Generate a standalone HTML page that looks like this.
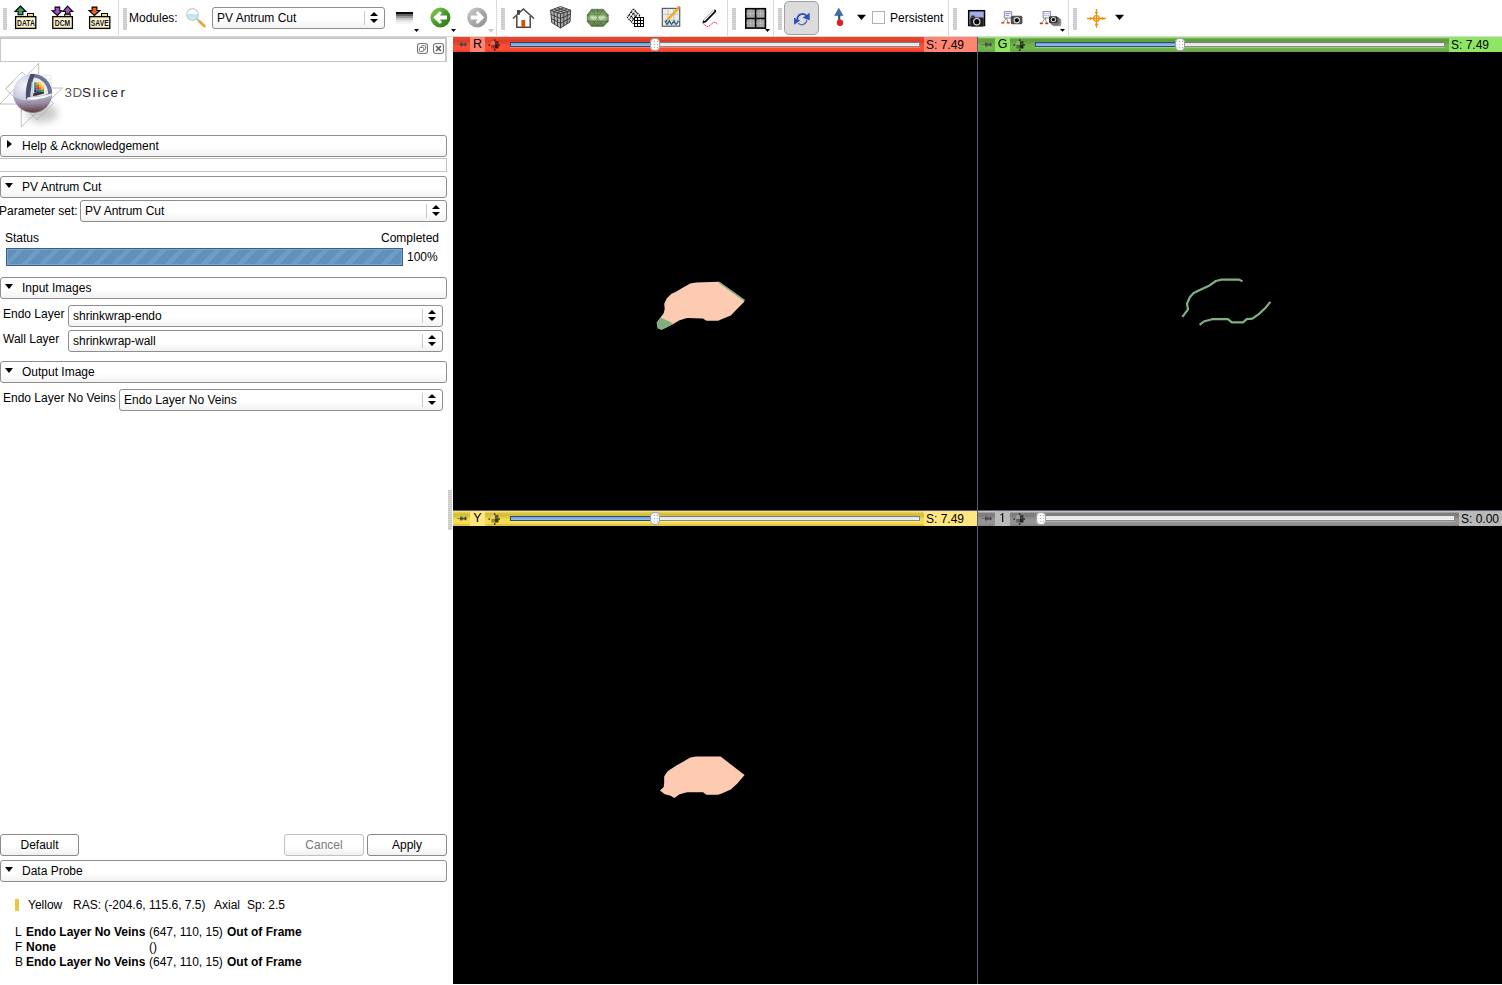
<!DOCTYPE html>
<html><head><meta charset="utf-8">
<style>
*{box-sizing:border-box;margin:0;padding:0}
html,body{width:1502px;height:985px;overflow:hidden;background:#fff;font-family:"Liberation Sans",sans-serif;font-size:12px;color:#000}
.a{position:absolute}
.t{position:absolute;white-space:pre;line-height:14px}
.grip{position:absolute;width:4px;height:22px;top:8px;background:repeating-linear-gradient(#c8c8c8 0 1px,#d8d8d8 1px 2px)}
.sep{position:absolute;top:0;width:1px;height:36px;background:#dcdcdc}
.hdr{position:absolute;left:0;width:447px;height:22px;border:1px solid #8e8e8e;border-radius:3px;background:linear-gradient(#fff 0%,#fff 55%,#f2f2f2 100%)}
.hdr .t{left:21px;top:3px}
.tri-d{position:absolute;left:4px;top:6px;width:0;height:0;border-left:4.7px solid transparent;border-right:4.7px solid transparent;border-top:5.8px solid #000}
.tri-r{position:absolute;left:6px;top:4px;width:0;height:0;border-top:4.6px solid transparent;border-bottom:4.6px solid transparent;border-left:5.4px solid #000}
.combo{position:absolute;height:22px;border:1px solid #8e8e8e;border-radius:3px;background:linear-gradient(#fff 0%,#fff 55%,#f2f2f2 100%)}
.combo .t{left:4px;top:3px}
.combo .cs{position:absolute;right:19px;top:3px;width:1px;height:14px;background:#c8c8c8}
.combo .au{position:absolute;right:6px;top:4px;border-left:4px solid transparent;border-right:4px solid transparent;border-bottom:4px solid #000}
.combo .ad{position:absolute;right:6px;top:11px;border-left:4px solid transparent;border-right:4px solid transparent;border-top:4px solid #000}
.btn{position:absolute;height:22px;border:1px solid #8a8a8a;border-radius:3px;background:linear-gradient(#fff 0%,#fff 55%,#f0f0f0 100%)}
.btn .t{top:3px;width:100%;text-align:center}
.bar{position:absolute;height:15px;overflow:hidden}
.view{position:absolute;background:#000}
.blab{top:1px;line-height:13px;font-size:12.5px}
.slab{top:2px;line-height:13px;font-size:12px}
.gfill{border:1px solid #2c4a72;border-right:none;background:linear-gradient(#74a0cc,#88b6e4 70%,#98c6f4)}
.gempty{border:1px solid #888;border-left:none;border-top-color:#7a8080;background:linear-gradient(#e4e4e4,#e8e8e8 60%,#f4f4f4)}
.gempty2{border:1px solid #8a8a8a;border-top:none;border-left:none;background:linear-gradient(#e8e8e8,#eaeaea 60%,#f6f6f6)}
.handle{width:10px;height:13px;border-radius:4px;border:1px solid #9aa0a4;background:#fafafa}
</style></head><body>

<!-- TOOLBAR -->
<div class="a" style="left:0;top:0;width:1502px;height:36px;background:#fff"></div>
<div class="a" style="left:0;top:36px;width:1502px;height:1px;background:#dadada"></div>
<div class="grip" style="left:3px"></div>
<div class="sep" style="left:118px"></div>
<div class="grip" style="left:123px"></div>
<div class="t" style="left:129px;top:11px">Modules:</div>
<div class="combo" style="left:212px;top:7px;width:173px"><div class="t">PV Antrum Cut</div><div class="cs"></div><div class="au"></div><div class="ad"></div></div>
<div class="sep" style="left:496px"></div>
<div class="grip" style="left:501px"></div>
<div class="sep" style="left:727px"></div>
<div class="grip" style="left:732px"></div>
<div class="sep" style="left:773px"></div>
<div class="grip" style="left:778px"></div>
<div class="a" style="left:784px;top:1px;width:35px;height:34px;border:1px solid #a0a0a0;border-radius:5px;background:#dcdcdc"></div>
<div class="a" style="left:872px;top:11px;width:13px;height:13px;border:1px solid #b0b0b0;background:#fff"></div>
<div class="t" style="left:890px;top:11px">Persistent</div>
<div class="sep" style="left:948px"></div>
<div class="grip" style="left:953px"></div>
<div class="sep" style="left:1068px"></div>
<div class="grip" style="left:1073px"></div>

<svg class="a" style="left:0;top:0" width="1502" height="36" viewBox="0 0 1502 36">
<defs>
<linearGradient id="fold" x1="0" y1="0" x2="0" y2="1"><stop offset="0" stop-color="#f6dc80"/><stop offset=".25" stop-color="#fff8dc"/><stop offset=".8" stop-color="#fff8dc"/><stop offset="1" stop-color="#f4d880"/></linearGradient>
<linearGradient id="gback" x1="0" y1="0" x2="1" y2="1"><stop offset="0" stop-color="#8ed858"/><stop offset=".5" stop-color="#4a9a2a"/><stop offset="1" stop-color="#2e6e16"/></linearGradient>
<linearGradient id="gfwd" x1="0" y1="0" x2="1" y2="1"><stop offset="0" stop-color="#d0d0d0"/><stop offset=".5" stop-color="#a8a8a8"/><stop offset="1" stop-color="#8e8e8e"/></linearGradient>
<radialGradient id="oct" cx=".5" cy=".5" r=".6"><stop offset="0" stop-color="#d8ecc4"/><stop offset=".6" stop-color="#94b47c"/><stop offset="1" stop-color="#4a6a3a"/></radialGradient>
<linearGradient id="glass" x1="0" y1="0" x2="0" y2="1"><stop offset="0" stop-color="#fff"/><stop offset=".45" stop-color="#f4fbff"/><stop offset=".5" stop-color="#b8e0f0"/><stop offset="1" stop-color="#d8f0fa"/></linearGradient>
</defs>
<!-- DATA -->
<g transform="translate(12,4)">
<polygon points="8.4,2 13.9,7.5 10.9,7.5 10.9,10.8 6.1,10.8 6.1,7.5 3,7.5" fill="#3a9a5c" stroke="#000" stroke-width="1.1" stroke-linejoin="miter"/>
<rect x="15" y="9" width="7" height="4" fill="#000"/><rect x="16" y="10" width="5" height="3" fill="#f8e08c"/>
<rect x="3.6" y="12.6" width="20.2" height="11.8" fill="url(#fold)" stroke="#000" stroke-width="1.3"/>
<text x="5" y="21.9" font-family="Liberation Sans" font-weight="bold" font-size="9.4" textLength="17.8" lengthAdjust="spacingAndGlyphs" fill="#111">DATA</text>
</g>
<!-- DCM -->
<g transform="translate(48,4)">
<polygon points="7.1,3.1 11.7,3.1 11.7,6.8 13.8,6.8 9.4,11.4 4.1,6.8 7.1,6.8" fill="#a050d0" stroke="#000" stroke-width="1.1"/>
<polygon points="19.5,2.1 24.7,7.5 21.9,7.5 21.9,10 17.5,10 17.5,7.5 15,7.5" fill="#a050d0" stroke="#000" stroke-width="1.1"/>
<rect x="16.2" y="9.8" width="6.6" height="3.2" fill="#000"/><rect x="17.2" y="10.8" width="4.6" height="2.2" fill="#f8e08c"/>
<rect x="4.8" y="12.6" width="19.6" height="11.8" fill="url(#fold)" stroke="#000" stroke-width="1.3"/>
<text x="6.8" y="21.9" font-family="Liberation Sans" font-weight="bold" font-size="9.4" textLength="15.4" lengthAdjust="spacingAndGlyphs" fill="#111">DCM</text>
</g>
<!-- SAVE -->
<g transform="translate(86,4)">
<polygon points="6.1,3.1 10.9,3.1 10.9,6.5 13.9,6.5 8.4,11.4 3,6.5 6.1,6.5" fill="#f06018" stroke="#000" stroke-width="1.1"/>
<rect x="15" y="9" width="7" height="4" fill="#000"/><rect x="16" y="10" width="5" height="3" fill="#f8e08c"/>
<rect x="3.6" y="12.6" width="20.2" height="11.8" fill="url(#fold)" stroke="#000" stroke-width="1.3"/>
<text x="4.8" y="21.9" font-family="Liberation Sans" font-weight="bold" font-size="9.4" textLength="17.9" lengthAdjust="spacingAndGlyphs" fill="#111">SAVE</text>
</g>
<!-- magnifier -->
<line x1="196.5" y1="18.6" x2="199.2" y2="21.2" stroke="#b8bcc0" stroke-width="2"/>
<line x1="199.6" y1="21.6" x2="204.4" y2="26" stroke="#e8a838" stroke-width="2.8" stroke-linecap="round"/>
<circle cx="192.5" cy="14.4" r="5.8" fill="url(#glass)" stroke="#c4c8cc" stroke-width="1.1"/>
<path d="M187,14 Q189,12.5 192,13.8 Q195,15 198,13.2" fill="none" stroke="#fff" stroke-width=".8" opacity=".8"/>
<!-- gradient icon -->
<rect x="396" y="12" width="17" height="2" fill="#0a0a0a"/>
<rect x="396" y="14" width="17" height="2" fill="#646464"/>
<rect x="396" y="16" width="17" height="2" fill="#989898"/>
<rect x="396" y="18" width="17" height="2" fill="#c8c8c8"/>
<rect x="396" y="20" width="17" height="2" fill="#e8e8e8"/>
<rect x="396" y="22" width="17" height="2" fill="#f4f4f4"/>
<polygon points="414,29 419,29 416.5,32" fill="#000"/>
<!-- back -->
<circle cx="440.4" cy="17.5" r="10" fill="url(#gback)"/>
<polygon points="433.2,17.5 439.9,11 442,13 439.8,15.5 446.9,15.5 446.9,19.5 439.8,19.5 442,22 439.9,24" fill="#fff"/>
<polygon points="451,29 456,29 453.5,32" fill="#000"/>
<!-- forward -->
<circle cx="477.2" cy="17.5" r="10" fill="url(#gfwd)"/>
<polygon points="484.4,17.5 477.7,11 475.6,13 477.8,15.5 470.7,15.5 470.7,19.5 477.8,19.5 475.6,22 477.7,24" fill="#fff"/>
<polygon points="488,29 494,29 491,32.4" fill="#c8c8c8"/>
<!-- house -->
<rect x="517" y="10.1" width="3" height="4.5" fill="#404040"/>
<polyline points="512.9,18.5 523.4,9 534,18.5" fill="none" stroke="#4a4a4a" stroke-width="1.6"/>
<polyline points="516.8,15.5 516.8,27.2 530.2,27.2 530.2,15.5" fill="#fff" stroke="#4a4a4a" stroke-width="1.5"/>
<rect x="521.4" y="20" width="3.8" height="7" fill="#d85000"/>
<!-- cube -->
<g stroke="#333" stroke-width="0.9" fill="#9a9a9a">
<polygon points="560.5,6.5 570.7,10.3 560.5,13.8 550.6,10.3" fill="#cccccc"/>
<polygon points="550.6,10.3 560.5,13.8 560.5,28 551.7,22.6" fill="#b4b4b4"/>
<polygon points="560.5,13.8 570.7,10.3 570,22 560.5,28" fill="#a4a4a4"/>
<path d="M553.9,9.1 L563.9,12.6 M557.2,7.8 L567.3,11.5 M563.9,7.8 L553.9,11.5 M567.3,9.1 L557.2,12.6 M550.9,14.4 L560.5,18.5 M551.2,18.5 L560.5,23.3 M553.9,11.5 L554.6,24.4 M557.2,12.6 L557.6,26.2 M560.5,18.5 L570.4,14.2 M560.5,23.3 L570.2,18.1 M563.9,12.6 L563.7,26 M567.3,11.5 L567,24" fill="none"/>
</g>
<!-- octagon -->
<linearGradient id="octg" x1="0" y1="0" x2="0" y2="1"><stop offset="0" stop-color="#587848"/><stop offset=".3" stop-color="#88a870"/><stop offset=".38" stop-color="#a8c890"/><stop offset=".5" stop-color="#cce4b8"/><stop offset=".62" stop-color="#a8c890"/><stop offset=".7" stop-color="#789860"/><stop offset="1" stop-color="#587848"/></linearGradient>
<linearGradient id="octh" x1="0" y1="0" x2="1" y2="0"><stop offset="0" stop-color="#3a5a2a" stop-opacity=".6"/><stop offset=".2" stop-color="#3a5a2a" stop-opacity="0"/><stop offset=".8" stop-color="#3a5a2a" stop-opacity="0"/><stop offset="1" stop-color="#3a5a2a" stop-opacity=".6"/></linearGradient>
<polygon points="591.5,9.2 603.3,9.2 608.3,14.9 608.3,21.4 603.3,26.4 591.5,26.4 587.2,21.4 587.2,14.9" fill="url(#octg)"/>
<polygon points="591.5,9.2 603.3,9.2 608.3,14.9 608.3,21.4 603.3,26.4 591.5,26.4 587.2,21.4 587.2,14.9" fill="url(#octh)" stroke="#4a6040" stroke-width=".5"/>
<path d="M597.7,9.2 V26.4 M587.2,14.9 H608.3 M587.2,21.4 H608.3 M591.5,9.2 L603.3,26.4 M603.3,9.2 L591.5,26.4 M587.2,14.9 L597.7,26.4 M608.3,14.9 L597.7,26.4" stroke="#2a4020" stroke-width=".5" opacity=".55" fill="none"/>
<!-- grid icon -->
<path d="M633.40,9.00 L639.80,15.50 M631.30,11.80 L637.70,18.30 M629.20,14.60 L635.60,21.10 M627.10,17.40 L633.50,23.90 M633.40,9.00 L627.10,17.40 M635.53,11.17 L629.23,19.57 M637.67,13.33 L631.37,21.73 M639.80,15.50 L633.50,23.90" fill="none" stroke="#000" stroke-width="1.25" stroke-dasharray="1.1 .9"/>
<g shape-rendering="crispEdges">
<rect x="634" y="17" width="10" height="10" fill="#000"/>
<g fill="#fff"><rect x="635" y="18" width="2" height="2"/><rect x="638" y="18" width="2" height="2"/><rect x="641" y="18" width="2" height="2"/><rect x="635" y="21" width="2" height="2"/><rect x="638" y="21" width="2" height="2"/><rect x="641" y="21" width="2" height="2"/><rect x="635" y="24" width="2" height="2"/><rect x="638" y="24" width="2" height="2"/><rect x="641" y="24" width="2" height="2"/></g>
</g>
<!-- editor -->
<rect x="662.3" y="8.4" width="17.4" height="17.8" fill="#ececec" stroke="#5a5a5a" stroke-width="1.2"/>
<path d="M668.1,8.4 V26.2 M673.9,8.4 V26.2 M662.3,14.3 H679.7 M662.3,20.2 H679.7" stroke="#b4b4b4" stroke-width=".7"/>
<polyline points="665,21 667,24.5 669.5,21 671.5,24.5 674,21 676,24.5 678.6,21" fill="none" stroke="#2a6a8c" stroke-width="1.3"/>
<line x1="667" y1="20.3" x2="678.2" y2="8.4" stroke="#e8b020" stroke-width="2.6"/>
<circle cx="679" cy="7.5" r="1.5" fill="#f07860"/>
<polygon points="665.5,22 666,19.7 667.7,21.3" fill="#333"/>
<!-- pen -->
<path d="M703.2,23.4 C705,25.5 706.5,26.6 708.2,26.4 C710,26 711.5,23.6 713.5,22.5 C715,21.8 716.5,23 717.6,24.4" fill="none" stroke="#e02848" stroke-width="1" stroke-dasharray="1.6 .6"/>
<line x1="705" y1="20.8" x2="714.6" y2="11.2" stroke="#000" stroke-width="3.2" stroke-linecap="round"/>
<line x1="704.5" y1="20.2" x2="713.8" y2="10.8" stroke="#fff" stroke-width="1.5" stroke-linecap="round"/>
<line x1="704" y1="19.8" x2="713.2" y2="10.4" stroke="#999" stroke-width=".5"/>
<polygon points="702.3,23.2 703.2,20.4 705.3,22.3" fill="#000"/>
<!-- layout -->
<rect x="745.8" y="8.7" width="19.6" height="19.4" fill="#a4a4a4" stroke="#000" stroke-width="1.6"/>
<path d="M755.6,8.7 V28.1 M745.8,18.4 H765.4" stroke="#000" stroke-width="1.5"/>
<path d="M750.7,9.6 V17.6 M760.5,9.6 V17.6 M750.7,19.2 V27.2 M760.5,19.2 V27.2 M746.6,13.6 H754.8 M756.4,13.6 H764.6 M746.6,23.2 H754.8 M756.4,23.2 H764.6" stroke="#f4f0c0" stroke-width=".7" stroke-dasharray=".7 1.3" fill="none"/>
<polygon points="765,29 770,29 767.5,32" fill="#000"/>
<!-- sync -->
<path d="M797.5,19.5 A5,5 0 0 1 806.2,15.6" fill="none" stroke="#2a50c0" stroke-width="1.7"/>
<path d="M806.8,19.8 A5,5 0 0 1 798.2,23.2" fill="none" stroke="#5a6aa8" stroke-width="1.2"/>
<polygon points="802.6,17.8 809.6,12.8 809.8,20.2" fill="#2a50c0"/>
<polygon points="794,17.8 800.2,20.6 794.2,24.8" fill="#2a50c0"/>
<!-- arrow ball -->
<line x1="839.2" y1="15" x2="839.2" y2="21" stroke="#2a5a8a" stroke-width="2.2"/>
<polygon points="838.8,8.3 843,15.6 834.6,15.6" fill="#3a70a8" stroke="#2a5080" stroke-width=".5"/>
<circle cx="840" cy="22.8" r="3.2" fill="#e02020"/>
<polygon points="857,14.8 866,14.8 861.5,20" fill="#000"/>
<!-- cam1 -->
<rect x="968.7" y="10.7" width="15.8" height="14.8" fill="#a8acec" stroke="#000" stroke-width="1.5"/>
<rect x="971.2" y="15.6" width="3.6" height="2.4" rx=".5" fill="#333" stroke="#888" stroke-width=".4"/>
<rect x="970.2" y="17.4" width="13.6" height="9" rx="1.6" fill="#1c1c1c" stroke="#555" stroke-width=".5"/>
<circle cx="976.8" cy="21.7" r="3.7" fill="#e4e4e4"/>
<circle cx="976.8" cy="21.7" r="2.6" fill="#111"/>
<circle cx="976.8" cy="21.7" r="1.6" fill="#000"/>
<!-- cam2 -->
<rect x="1004.3" y="11.6" width="7.4" height="6.4" fill="#eef0ff" stroke="#8a8a8a" stroke-width=".9"/>
<path d="M1005.5,13.5 H1010.5 M1005.5,15.5 H1009" stroke="#4a5ae0" stroke-width=".6"/>
<path d="M1006.5,18 L1003,22.6 M1006.5,18 L1008.2,22.6" stroke="#666" stroke-width=".7"/>
<rect x="1001.3" y="22" width="3" height="1.6" fill="#d84a10"/><rect x="1006.7" y="22" width="3" height="1.6" fill="#d84a10"/>
<rect x="1010.8" y="15.8" width="11.6" height="8.5" rx="1.5" fill="#505050"/>
<circle cx="1016.8" cy="20.2" r="3.2" fill="#d8d8d8"/>
<circle cx="1016.8" cy="20.2" r="2" fill="#000"/>
<!-- cam3 -->
<rect x="1043.1" y="11.4" width="7.4" height="6.6" fill="#eef0ff" stroke="#8a8a8a" stroke-width=".9"/>
<path d="M1044.3,13.5 H1049.3 M1044.3,15.5 H1049.3" stroke="#4a5ae0" stroke-width=".6" stroke-dasharray="1 1"/>
<path d="M1045.3,18 L1041.5,23.3 M1045.3,18 L1046.8,23.3" stroke="#666" stroke-width=".7"/>
<rect x="1039.8" y="22.6" width="3" height="1.6" fill="#b83a10"/><rect x="1045.2" y="22.6" width="3" height="1.6" fill="#b83a10"/>
<rect x="1052.5" y="19" width="8.3" height="6.7" rx="1" fill="#9a9a9a" stroke="#666" stroke-width=".6"/>
<rect x="1050.8" y="17.6" width="8.3" height="6.7" rx="1" fill="#7a7a7a" stroke="#555" stroke-width=".6"/>
<rect x="1049" y="16.2" width="8.6" height="6.8" rx="1.3" fill="#333"/>
<circle cx="1053.4" cy="19.6" r="2.7" fill="#d0d0d0"/>
<circle cx="1053.4" cy="19.6" r="1.6" fill="#000"/>
<polygon points="1060,29 1065,29 1062.5,31.8" fill="#000"/>
<!-- crosshair -->
<g stroke="#f09010" stroke-width="1.3" fill="none">
<path d="M1087,18.5 H1106 M1096.5,9 V27.8 M1090.5,17 V20 M1102.5,17 V20 M1095,12.5 H1098 M1095,24.5 H1098"/>
<circle cx="1096.5" cy="18.5" r="2.8"/>
</g>
<polygon points="1115,14.8 1124.1,14.8 1119.5,20" fill="#000"/>
</svg>

<!-- LEFT PANEL -->
<div class="a" style="left:0;top:37px;width:453px;height:948px;background:#fff"></div>
<div class="a" style="left:0;top:37px;width:447px;height:25px;border:2px solid #c8c8c8;border-left-width:1.5px;border-bottom-width:1.5px;background:#fff"></div>
<svg class="a" style="left:416px;top:42px" width="30" height="13" viewBox="0 0 30 13">
<rect x="1.5" y="1.5" width="10" height="10" rx="2.5" fill="none" stroke="#767676" stroke-width="1.1"/>
<rect x="5.2" y="3.6" width="4.4" height="4" rx="1" fill="none" stroke="#707070" stroke-width="1"/>
<rect x="3.4" y="5.5" width="4.4" height="4" rx="1" fill="#fff" stroke="#707070" stroke-width="1"/>
<rect x="17.5" y="1.5" width="10" height="10" rx="2.5" fill="none" stroke="#767676" stroke-width="1.1"/>
<path d="M20,4 L25,9 M25,4 L20,9" stroke="#5e5e5e" stroke-width="1.7"/>
</svg>

<svg class="a" style="left:0;top:60px" width="140" height="72" viewBox="0 0 140 72">
<defs>
<radialGradient id="sph" cx=".3" cy=".3" r=".85"><stop offset="0" stop-color="#f4f5fa"/><stop offset=".45" stop-color="#c4c8dc"/><stop offset=".8" stop-color="#8a7c90"/><stop offset="1" stop-color="#5a3a3a"/></radialGradient>
<linearGradient id="low" x1="0" y1="0" x2="0" y2="1"><stop offset="0" stop-color="#b8bcd4"/><stop offset=".5" stop-color="#9a8ca4"/><stop offset="1" stop-color="#5a3838"/></linearGradient>
<filter id="blur" x="-50%" y="-50%" width="200%" height="200%"><feGaussianBlur stdDeviation="4"/></filter>
</defs>
<ellipse cx="42" cy="53" rx="16" ry="9" fill="#000" opacity=".22" filter="url(#blur)"/>
<g stroke="#a8a8a8" stroke-width=".7" fill="none">
<path d="M38.7,3.2 L0,44 H21.3 V66.8 L62.5,28 H49.8"/>
<path d="M38.7,3.2 V15.3"/>
<path d="M5.7,28.8 L22,12 L53.3,43.4 L37,59.7 Z"/>
</g>
<g stroke="#d0d0d0" stroke-width=".5" fill="none">
<path d="M34.8,15.3 H51.2 V32 M38,15.3 V32 M42,15.3 V32 M46,15.3 V32 M34.8,19 H51.2 M34.8,23 H51.2 M34.8,27 H51.2"/>
</g>
<!-- sphere base -->
<circle cx="32.5" cy="33.4" r="19.5" fill="url(#sph)"/>
<!-- lower half shading -->
<path d="M13.2,36 Q22,42 35,40 Q46,38 51.8,34 A19.5,19.5 0 0 1 13.2,36 Z" fill="url(#low)" opacity=".9"/>
<!-- cut out region (upper-right quadrant) -->
<path d="M30.5,14 A19.5,19.5 0 0 1 51.9,35 Q46,38.5 38,39 Q31,39.6 26,39.6 Q25,26 30.5,14 Z" fill="#6a7498"/>
<path d="M33.5,17.5 A15.8,15.8 0 0 1 48,33.8 Q44,36 37.5,36.6 Q32,37 29,37 Q28.5,26 33.5,17.5 Z" fill="#e8eaec"/>
<path d="M30.8,13.9 Q33.5,13.6 35,14.2 Q30.5,25 30.2,39.5 L26,39.6 Q25,26 30.8,13.9 Z" fill="#4a4e6e"/>
<path d="M31.5,22 Q32.5,30 31,37 L33,36.5 Q33.5,29 33,22 Z" fill="#c8ccd0"/>
<path d="M33.5,33 L44,29 L44,33.6 Q38,36 33,36.2 Z" fill="#1a1a1a" opacity=".85"/>
<g>
<rect x="34.2" y="22.4" width="2.4" height="2.4" fill="#2aa040"/><rect x="36.6" y="22.4" width="2.4" height="2.4" fill="#f0a020"/><rect x="39" y="22.4" width="2.4" height="2.4" fill="#f4d050"/><rect x="41.4" y="22.4" width="2.4" height="2.4" fill="#fbecb0"/>
<rect x="34.2" y="24.8" width="2.4" height="2.4" fill="#20a040"/><rect x="36.6" y="24.8" width="2.4" height="2.4" fill="#f05020"/><rect x="39" y="24.8" width="2.4" height="2.4" fill="#f0b020"/><rect x="41.4" y="24.8" width="2.4" height="2.4" fill="#f8d860"/>
<rect x="34.2" y="27.2" width="2.4" height="2.4" fill="#2060d0"/><rect x="36.6" y="27.2" width="2.4" height="2.4" fill="#f02020"/><rect x="39" y="27.2" width="2.4" height="2.4" fill="#f06020"/><rect x="41.4" y="27.2" width="2.4" height="2.4" fill="#f0b030"/>
<rect x="34.2" y="29.6" width="2.4" height="2.4" fill="#303030"/><rect x="36.6" y="29.6" width="2.4" height="2.4" fill="#2070d0"/><rect x="39" y="29.6" width="2.4" height="2.4" fill="#20a050"/><rect x="41.4" y="29.6" width="2.4" height="2.4" fill="#60b040"/>
</g>
<path d="M28,37.3 Q40,37.5 51.5,33.6 L51.8,35.2 Q44,39 36,39.6 Q30,40 26.2,39.6 Z" fill="#f6f6f8"/>
<g stroke="#888" stroke-width=".5" fill="none" opacity=".7">
<path d="M21.3,44 V52 M21.3,44 L32,41 M5.7,28.8 L13,21"/>
</g>
<text y="36.8" font-family="Liberation Sans" font-size="13.4" fill="#5c5c5c"><tspan x="64.6 72.6">3D</tspan><tspan fill="#1e1e1e" x="82 92.4 97.4 102.4 110.6 120.6">Slicer</tspan></text>
</svg>

<div class="hdr" style="top:135px"><div class="tri-r"></div><div class="t">Help &amp; Acknowledgement</div></div>
<div class="a" style="left:0;top:158px;width:447px;height:14px;border:1px solid #c4c4c4;border-left:none"></div>
<div class="hdr" style="top:176px"><div class="tri-d"></div><div class="t">PV Antrum Cut</div></div>
<div class="t" style="left:-1px;top:204px">Parameter set:</div>
<div class="combo" style="left:80px;top:200px;width:367px"><div class="t">PV Antrum Cut</div><div class="cs"></div><div class="au"></div><div class="ad"></div></div>
<div class="t" style="left:5px;top:231px">Status</div>
<div class="t" style="left:381px;top:231px">Completed</div>
<div class="a" style="left:6px;top:248px;width:397px;height:18px;border:1px solid #3e5c7c;box-shadow:inset 0 0 0 1px #74a8dc;background:repeating-linear-gradient(135deg,#6390b8 0 8px,#6c9cc8 8px 12.7px)"></div>
<div class="t" style="left:407px;top:250px">100%</div>
<div class="hdr" style="top:277px"><div class="tri-d"></div><div class="t">Input Images</div></div>
<div class="t" style="left:3px;top:307px">Endo Layer</div>
<div class="combo" style="left:68px;top:305px;width:375px"><div class="t">shrinkwrap-endo</div><div class="cs"></div><div class="au"></div><div class="ad"></div></div>
<div class="t" style="left:3px;top:332px">Wall Layer</div>
<div class="combo" style="left:68px;top:330px;width:375px"><div class="t">shrinkwrap-wall</div><div class="cs"></div><div class="au"></div><div class="ad"></div></div>
<div class="hdr" style="top:361px"><div class="tri-d"></div><div class="t">Output Image</div></div>
<div class="t" style="left:3px;top:391px">Endo Layer No Veins</div>
<div class="combo" style="left:119px;top:389px;width:324px"><div class="t">Endo Layer No Veins</div><div class="cs"></div><div class="au"></div><div class="ad"></div></div>

<div class="btn" style="left:0;top:834px;width:79px"><div class="t">Default</div></div>
<div class="btn" style="left:284px;top:834px;width:80px;border-color:#c0c0c0;color:#7a7a7a"><div class="t">Cancel</div></div>
<div class="btn" style="left:367px;top:834px;width:80px"><div class="t">Apply</div></div>
<div class="hdr" style="top:860px"><div class="tri-d"></div><div class="t">Data Probe</div></div>

<div class="a" style="left:15px;top:899px;width:4px;height:12px;background:#e8c840"></div>
<div class="t" style="left:28px;top:898px">Yellow</div>
<div class="t" style="left:73px;top:898px">RAS: (-204.6, 115.6, 7.5)</div>
<div class="t" style="left:214px;top:898px">Axial</div>
<div class="t" style="left:247px;top:898px">Sp: 2.5</div>
<div class="t" style="left:15px;top:925px">L</div><div class="t" style="left:26px;top:925px"><b>Endo Layer No Veins</b></div>
<div class="t" style="left:149px;top:925px">(647, 110, 15)</div><div class="t" style="left:227px;top:925px"><b>Out of Frame</b></div>
<div class="t" style="left:15px;top:940px">F</div><div class="t" style="left:26px;top:940px"><b>None</b></div>
<div class="t" style="left:149px;top:940px">()</div>
<div class="t" style="left:15px;top:955px">B</div><div class="t" style="left:26px;top:955px"><b>Endo Layer No Veins</b></div>
<div class="t" style="left:149px;top:955px">(647, 110, 15)</div><div class="t" style="left:227px;top:955px"><b>Out of Frame</b></div>

<!-- splitter grip -->
<div class="a" style="left:448px;top:490px;width:4px;height:40px;background:repeating-linear-gradient(#c8c8c8 0 1px,#d8d8d8 1px 2px)"></div>

<!-- VIEWS -->
<div class="view" style="left:453px;top:37px;width:1049px;height:947px"></div>
<div class="a" style="left:977px;top:37px;width:1px;height:947px;background:#5c5a72"></div>
<div class="a" style="left:453px;top:510px;width:1049px;height:1px;background:#5c5a72"></div>

<svg class="a" style="left:0;top:0" width="1502" height="985" viewBox="0 0 1502 985">
<polygon fill="#fdcbb2" points="696,282.4 719,281.8 744.6,300 744,302 737,309 730.8,315.4 721,319.6 718,320.7 706.3,320.7 703,318.4 687,318 679.6,320.2 673.2,323.9 664.7,328.2 661.5,329.8 657.8,328.2 656.7,322.8 660.5,317.5 663.7,313.2 664.7,309 664.2,303.7 666.9,298.3 671.1,294 676.4,291.4 681.8,288.2 690.3,283.4"/>
<polygon fill="#80b082" points="660.5,317.5 669,321.2 673.2,323.9 664.7,328.2 661.5,329.8 657.8,328.2 656.7,322.8"/>
<polyline fill="none" stroke="#80b082" stroke-width="1.6" points="719,282.3 744.3,300.3"/>
<polygon fill="#fdcbb2" points="696.1,756.5 720.6,756.5 744.6,775.1 737.1,783.7 730.8,789.5 721.2,793.8 718,794.8 706.3,794.8 703.1,792.2 687.1,792.2 679.6,794.3 674.3,798 670,795.4 664.7,794.3 660,790.6 663.7,786.9 664.2,782.6 664.2,776.2 667.9,770.9 676.4,765.6 681.8,762.4 690.3,757.6"/>
<polyline fill="none" stroke="#80b082" stroke-width="2.2" stroke-linejoin="round" points="1182.4,316.9 1188,309.4 1187,303.8 1189.8,297.3 1193.6,293.1 1202,288.9 1208.5,286.1 1215.9,281 1221.5,279.6 1239.2,279.6 1242.5,281.4"/>
<polyline fill="none" stroke="#80b082" stroke-width="2.2" stroke-linejoin="round" points="1199.6,324.8 1203.8,321.5 1212.2,319.2 1228,319.2 1231.8,322.4 1243,322.4 1246.7,319.2 1252.3,318.7 1258.8,314.1 1265.3,308 1270.4,301.9"/>
</svg>

<div class="bar" style="left:453px;top:37px;width:524px;background:linear-gradient(#f63e22 0px 1px,#e84830 1px 2px,#e0452d 2px 3px,#d8402a 3px 4px,#da4028 4px 5px,#e04430 5px 6px,#e84832 6px 7px,#f04a34 7px 8px,#f84c34 8px 9px,#ff4c34 9px 10px,#ff4c34 10px 11px,#ff4a30 11px 12px,#ff4a30 12px 13px,#f04830 13px 14px,#e04028 14px 15px)">
<div class="a" style="left:17px;top:0;width:15px;height:15px;background:#ff8472"></div>
<div class="t blab" style="left:17px;width:15px;text-align:center">R</div>
<svg class="a" style="left:3px;top:4px" width="12" height="7" viewBox="0 0 12 7"><path d="M1 3.5H5" stroke="#555" stroke-width="1" opacity=".6"/><rect x="4" y="1.5" width="2.5" height="4" rx="1" fill="#4a4a4a"/><rect x="6" y="2.8" width="3" height="1.6" fill="#4a4a4a"/><rect x="8.5" y="1.8" width="2" height="3.5" rx=".8" fill="#4a4a4a"/></svg>
<svg class="a" style="left:35px;top:1px" width="13" height="13" viewBox="0 0 13 13"><rect x="3.3" y="3.1" width="3.6" height="3.7" fill="#fff" opacity=".22"/><rect x="6.9" y="3.1" width="3.6" height="3.7" fill="#000" opacity=".55"/><rect x="3.3" y="6.8" width="3.6" height="3.7" fill="#000" opacity=".35"/><rect x="6.9" y="6.8" width="3.6" height="3.7" fill="#000" opacity=".75"/><circle cx="1.2" cy="7" r=".85" fill="#1a1a1a"/><circle cx="11.2" cy="7" r=".85" fill="#1a1a1a"/><circle cx="6.7" cy="2" r=".85" fill="#1a1a1a"/><circle cx="6.7" cy="11.9" r=".85" fill="#1a1a1a"/></svg>
<div class="a gfill" style="left:57px;top:5px;width:142px;height:5px"></div>
<div class="a gempty" style="left:205px;top:5px;width:262px;height:5px"></div>
<div class="a" style="left:57px;top:10px;width:410px;height:1px;background:#ff7a6a"></div>
<svg class="a" style="left:197px;top:1px" width="10" height="13" viewBox="0 0 10 13"><rect x=".5" y=".5" width="9" height="12" rx="3.6" fill="#fafafa" stroke="#98a0a6" stroke-width="1"/><g fill="#a4a4a4"><circle cx="4.4" cy="3.4" r=".6"/><circle cx="7.4" cy="3.4" r=".6"/><circle cx="4.4" cy="6.5" r=".6"/><circle cx="7.4" cy="6.5" r=".6"/><circle cx="4.4" cy="9.5" r=".6"/><circle cx="7.4" cy="9.5" r=".6"/></g><g fill="#c8c8c8"><circle cx="1.6" cy="3.4" r=".5"/><circle cx="1.6" cy="6.5" r=".5"/><circle cx="1.6" cy="9.5" r=".5"/></g></svg>
<div class="a" style="left:471px;top:0;width:53px;height:15px;background:#ff8472"></div>
<div class="t slab" style="left:473px">S: 7.49</div>
</div>
<div class="bar" style="left:978px;top:37px;width:524px;background:linear-gradient(#90e860 0px 1px,#74b450 1px 2px,#649e44 2px 3px,#609c40 3px 4px,#629e42 4px 5px,#66a244 5px 6px,#6aa848 6px 7px,#6eae4a 7px 8px,#70b24c 8px 9px,#70b44c 9px 10px,#70b44c 10px 11px,#70b44c 11px 12px,#70b44c 12px 13px,#6aa84a 13px 14px,#68a448 14px 15px)">
<div class="a" style="left:17px;top:0;width:15px;height:15px;background:#8ee664"></div>
<div class="t blab" style="left:17px;width:15px;text-align:center">G</div>
<svg class="a" style="left:3px;top:4px" width="12" height="7" viewBox="0 0 12 7"><path d="M1 3.5H5" stroke="#555" stroke-width="1" opacity=".6"/><rect x="4" y="1.5" width="2.5" height="4" rx="1" fill="#4a4a4a"/><rect x="6" y="2.8" width="3" height="1.6" fill="#4a4a4a"/><rect x="8.5" y="1.8" width="2" height="3.5" rx=".8" fill="#4a4a4a"/></svg>
<svg class="a" style="left:35px;top:1px" width="13" height="13" viewBox="0 0 13 13"><rect x="3.3" y="3.1" width="3.6" height="3.7" fill="#fff" opacity=".22"/><rect x="6.9" y="3.1" width="3.6" height="3.7" fill="#000" opacity=".55"/><rect x="3.3" y="6.8" width="3.6" height="3.7" fill="#000" opacity=".35"/><rect x="6.9" y="6.8" width="3.6" height="3.7" fill="#000" opacity=".75"/><circle cx="1.2" cy="7" r=".85" fill="#1a1a1a"/><circle cx="11.2" cy="7" r=".85" fill="#1a1a1a"/><circle cx="6.7" cy="2" r=".85" fill="#1a1a1a"/><circle cx="6.7" cy="11.9" r=".85" fill="#1a1a1a"/></svg>
<div class="a gfill" style="left:57px;top:5px;width:142px;height:5px"></div>
<div class="a gempty" style="left:205px;top:5px;width:262px;height:5px"></div>
<div class="a" style="left:57px;top:10px;width:410px;height:1px;background:#98cc80"></div>
<svg class="a" style="left:197px;top:1px" width="10" height="13" viewBox="0 0 10 13"><rect x=".5" y=".5" width="9" height="12" rx="3.6" fill="#fafafa" stroke="#98a0a6" stroke-width="1"/><g fill="#a4a4a4"><circle cx="4.4" cy="3.4" r=".6"/><circle cx="7.4" cy="3.4" r=".6"/><circle cx="4.4" cy="6.5" r=".6"/><circle cx="7.4" cy="6.5" r=".6"/><circle cx="4.4" cy="9.5" r=".6"/><circle cx="7.4" cy="9.5" r=".6"/></g><g fill="#c8c8c8"><circle cx="1.6" cy="3.4" r=".5"/><circle cx="1.6" cy="6.5" r=".5"/><circle cx="1.6" cy="9.5" r=".5"/></g></svg>
<div class="a" style="left:471px;top:0;width:53px;height:15px;background:#8ee664"></div>
<div class="t slab" style="left:473px">S: 7.49</div>
</div>
<div class="bar" style="left:453px;top:511px;width:524px;background:linear-gradient(#ffe44c 0px 1px,#e8d050 1px 2px,#d8c444 2px 3px,#d4bc3c 3px 4px,#d6be3e 4px 5px,#dcc440 5px 6px,#e4cc44 6px 7px,#ecd448 7px 8px,#f4da4a 8px 9px,#f8dc4c 9px 10px,#f8dc4c 10px 11px,#f8dc4c 11px 12px,#f8dc4c 12px 13px,#e0c448 13px 14px,#dcc848 14px 15px)">
<div class="a" style="left:17px;top:0;width:15px;height:15px;background:#ffe680"></div>
<div class="t blab" style="left:17px;width:15px;text-align:center">Y</div>
<svg class="a" style="left:3px;top:4px" width="12" height="7" viewBox="0 0 12 7"><path d="M1 3.5H5" stroke="#555" stroke-width="1" opacity=".6"/><rect x="4" y="1.5" width="2.5" height="4" rx="1" fill="#4a4a4a"/><rect x="6" y="2.8" width="3" height="1.6" fill="#4a4a4a"/><rect x="8.5" y="1.8" width="2" height="3.5" rx=".8" fill="#4a4a4a"/></svg>
<svg class="a" style="left:35px;top:1px" width="13" height="13" viewBox="0 0 13 13"><rect x="3.3" y="3.1" width="3.6" height="3.7" fill="#fff" opacity=".22"/><rect x="6.9" y="3.1" width="3.6" height="3.7" fill="#000" opacity=".55"/><rect x="3.3" y="6.8" width="3.6" height="3.7" fill="#000" opacity=".35"/><rect x="6.9" y="6.8" width="3.6" height="3.7" fill="#000" opacity=".75"/><circle cx="1.2" cy="7" r=".85" fill="#1a1a1a"/><circle cx="11.2" cy="7" r=".85" fill="#1a1a1a"/><circle cx="6.7" cy="2" r=".85" fill="#1a1a1a"/><circle cx="6.7" cy="11.9" r=".85" fill="#1a1a1a"/></svg>
<div class="a gfill" style="left:57px;top:5px;width:142px;height:5px"></div>
<div class="a gempty" style="left:205px;top:5px;width:262px;height:5px"></div>
<div class="a" style="left:57px;top:10px;width:410px;height:1px;background:#f8e888"></div>
<svg class="a" style="left:197px;top:1px" width="10" height="13" viewBox="0 0 10 13"><rect x=".5" y=".5" width="9" height="12" rx="3.6" fill="#fafafa" stroke="#98a0a6" stroke-width="1"/><g fill="#a4a4a4"><circle cx="4.4" cy="3.4" r=".6"/><circle cx="7.4" cy="3.4" r=".6"/><circle cx="4.4" cy="6.5" r=".6"/><circle cx="7.4" cy="6.5" r=".6"/><circle cx="4.4" cy="9.5" r=".6"/><circle cx="7.4" cy="9.5" r=".6"/></g><g fill="#c8c8c8"><circle cx="1.6" cy="3.4" r=".5"/><circle cx="1.6" cy="6.5" r=".5"/><circle cx="1.6" cy="9.5" r=".5"/></g></svg>
<div class="a" style="left:471px;top:0;width:53px;height:15px;background:#ffe680"></div>
<div class="t slab" style="left:473px">S: 7.49</div>
</div>
<div class="bar" style="left:978px;top:511px;width:524px;background:linear-gradient(#c4c4c2 0px 1px,#a0a0a0 1px 2px,#808080 2px 3px,#7c7c7c 3px 4px,#7e7e7e 4px 5px,#828282 5px 6px,#888888 6px 7px,#8e8e8e 7px 8px,#929292 8px 9px,#949494 9px 10px,#949494 10px 11px,#949494 11px 12px,#949494 12px 13px,#8c8c8c 13px 14px,#888888 14px 15px)">
<div class="a" style="left:17px;top:0;width:15px;height:15px;background:#b9b9b9"></div>
<svg class="a" style="left:17px;top:0" width="15" height="15" viewBox="0 0 15 15"><path d="M7.6,2.2 V11" stroke="#111" stroke-width="1.25"/><path d="M7.6,2.4 Q6.8,3.6 5.4,4" fill="none" stroke="#111" stroke-width="1"/></svg>
<svg class="a" style="left:3px;top:4px" width="12" height="7" viewBox="0 0 12 7"><path d="M1 3.5H5" stroke="#555" stroke-width="1" opacity=".6"/><rect x="4" y="1.5" width="2.5" height="4" rx="1" fill="#4a4a4a"/><rect x="6" y="2.8" width="3" height="1.6" fill="#4a4a4a"/><rect x="8.5" y="1.8" width="2" height="3.5" rx=".8" fill="#4a4a4a"/></svg>
<svg class="a" style="left:35px;top:1px" width="13" height="13" viewBox="0 0 13 13"><rect x="3.3" y="3.1" width="3.6" height="3.7" fill="#fff" opacity=".22"/><rect x="6.9" y="3.1" width="3.6" height="3.7" fill="#000" opacity=".55"/><rect x="3.3" y="6.8" width="3.6" height="3.7" fill="#000" opacity=".35"/><rect x="6.9" y="6.8" width="3.6" height="3.7" fill="#000" opacity=".75"/><circle cx="1.2" cy="7" r=".85" fill="#1a1a1a"/><circle cx="11.2" cy="7" r=".85" fill="#1a1a1a"/><circle cx="6.7" cy="2" r=".85" fill="#1a1a1a"/><circle cx="6.7" cy="11.9" r=".85" fill="#1a1a1a"/></svg>
<div class="a gempty2" style="left:66px;top:5px;width:411px;height:5px"></div>
<div class="a" style="left:57px;top:10px;width:420px;height:1px;background:#b0b0b0"></div>
<svg class="a" style="left:58px;top:1px" width="10" height="13" viewBox="0 0 10 13"><rect x=".5" y=".5" width="9" height="12" rx="3.6" fill="#fafafa" stroke="#98a0a6" stroke-width="1"/><g fill="#a4a4a4"><circle cx="4.4" cy="3.4" r=".6"/><circle cx="7.4" cy="3.4" r=".6"/><circle cx="4.4" cy="6.5" r=".6"/><circle cx="7.4" cy="6.5" r=".6"/><circle cx="4.4" cy="9.5" r=".6"/><circle cx="7.4" cy="9.5" r=".6"/></g><g fill="#c8c8c8"><circle cx="1.6" cy="3.4" r=".5"/><circle cx="1.6" cy="6.5" r=".5"/><circle cx="1.6" cy="9.5" r=".5"/></g></svg>
<div class="a" style="left:481px;top:0;width:43px;height:15px;background:#b9b9b9"></div>
<div class="t slab" style="left:483px">S: 0.00</div>
</div>
</body></html>
